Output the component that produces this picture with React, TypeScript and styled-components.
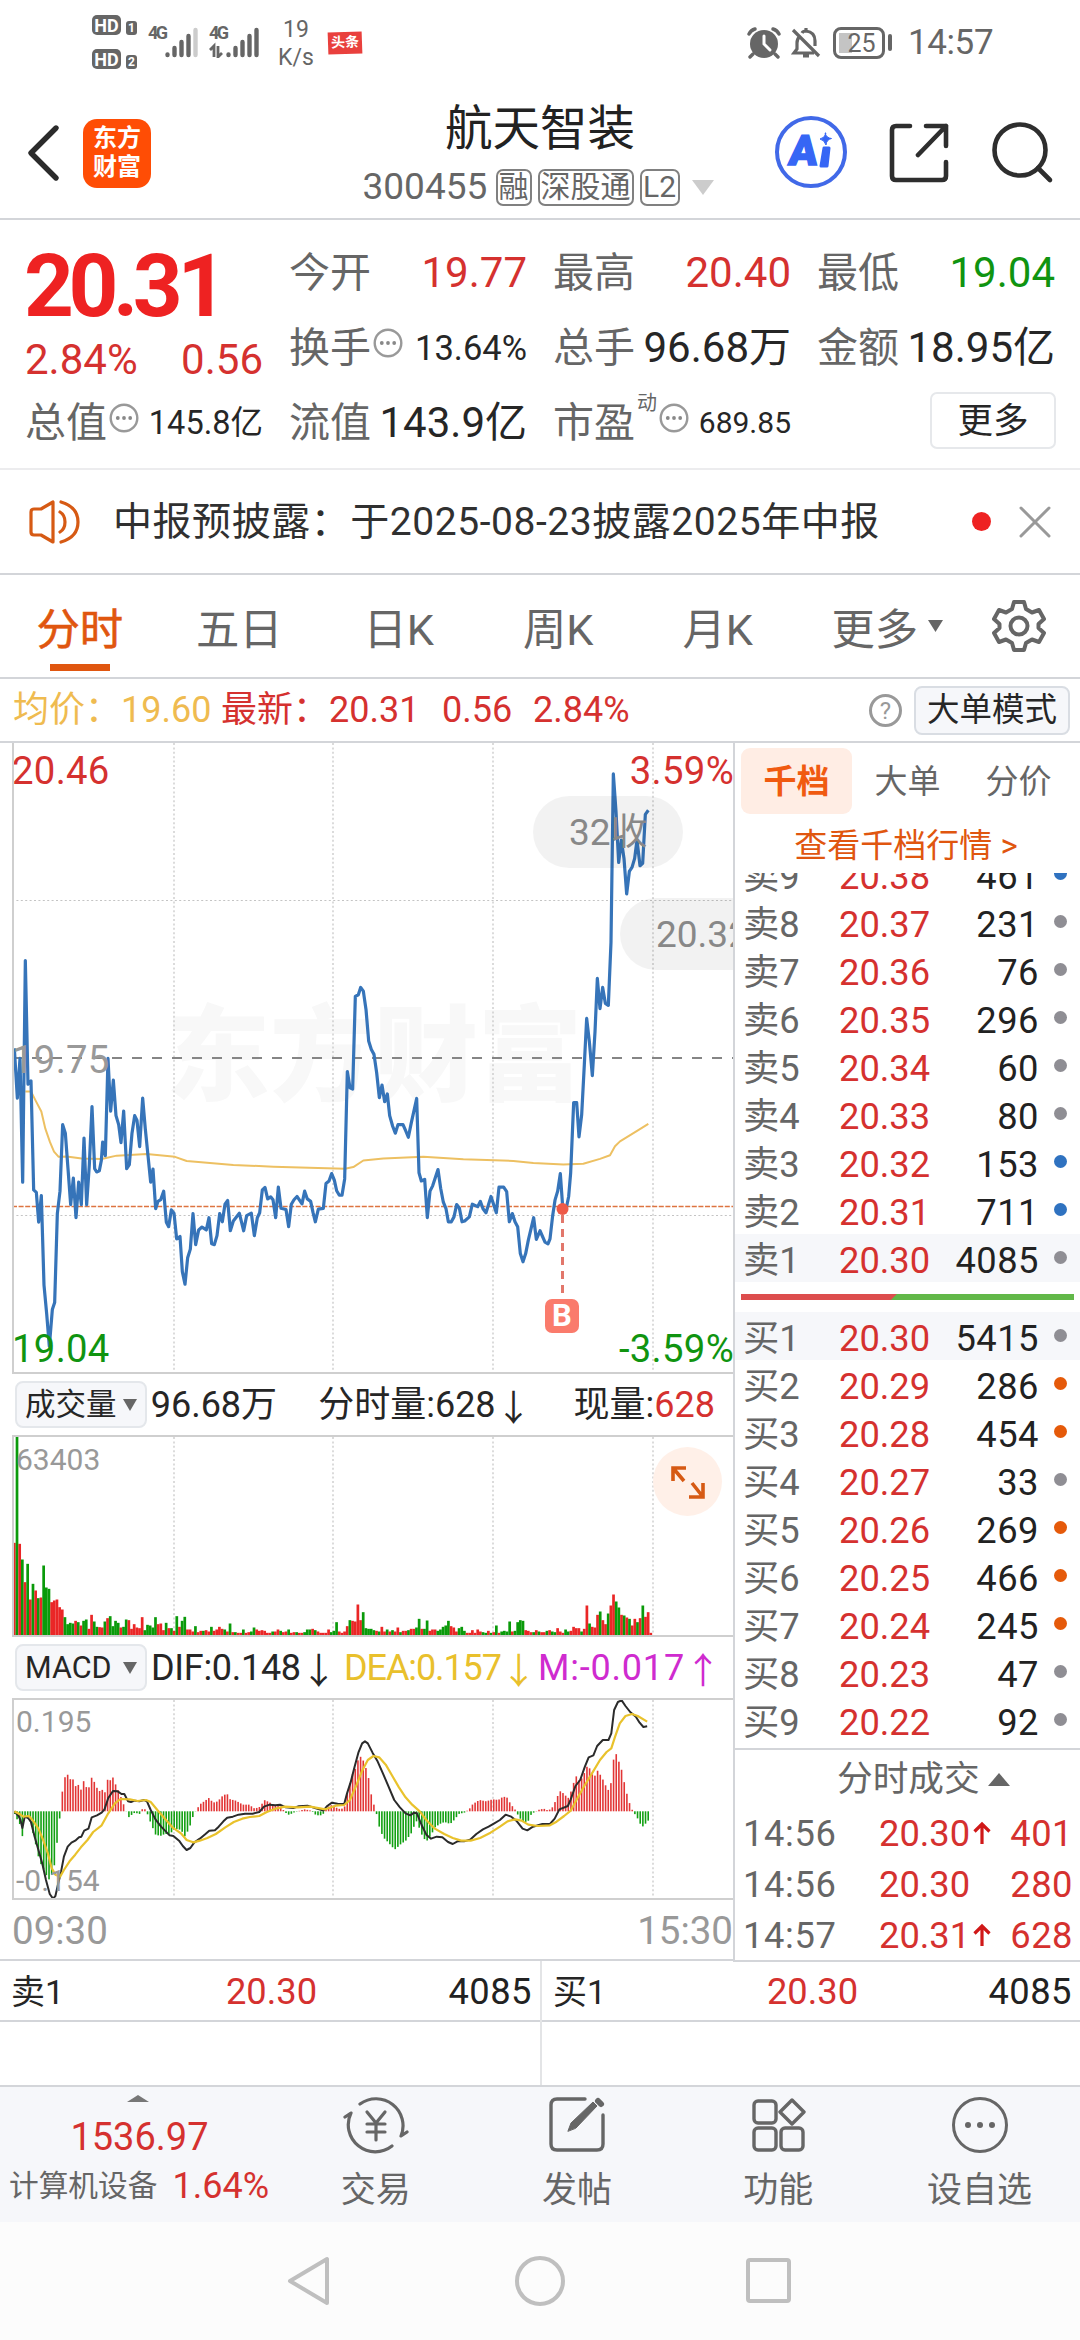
import React from "react";
import styled, { createGlobalStyle } from "styled-components";

const RED = "#d5312f";
const GREEN = "#109410";
const ORANGE = "#e0560f";
const GRAY = "#666";
const INK = "#262626";
const LINE = "#d3d5d9";

const Global = createGlobalStyle`
  *, *::before, *::after { box-sizing: border-box; }
  html, body { margin: 0; padding: 0; background: #fff; }
  body { font-family: Roboto, "Noto Sans CJK SC", sans-serif; color: ${INK}; }
  svg { display: block; flex: none; }
`;

const Screen = styled.main`
  width: 1080px;
  height: 2340px;
  display: flex;
  flex-direction: column;
  overflow: hidden;
  white-space: nowrap;
  background: #fff;
`;

/* ---------- status bar ---------- */
const StatusBar = styled.header`
  height: 88px;
  padding: 15px 88px 0 92px;
  display: flex;
  align-items: flex-start;
  color: ${GRAY};
`;
const HdStack = styled.div`
  display: flex;
  flex-direction: column;
  gap: 14px;
  width: 56px;
`;
const HdRow = styled.div`
  display: flex;
  align-items: flex-end;
  gap: 5px;
  height: 20px;
`;
const HdBadge = styled.span<{ $small?: boolean }>`
  width: ${(p) => (p.$small ? 11 : 29)}px;
  height: ${(p) => (p.$small ? 14 : 20)}px;
  border-radius: ${(p) => (p.$small ? 3 : 5)}px;
  background: #666;
  color: #fff;
  font-size: ${(p) => (p.$small ? 12 : 18)}px;
  line-height: ${(p) => (p.$small ? 14 : 21)}px;
  font-weight: 700;
  text-align: center;
`;
const Signal = styled.div`
  display: flex;
  width: 61px;
  padding-top: 10px;
`;
const SignalTag = styled.span`
  width: 17px;
  font-size: 18px;
  line-height: 16px;
  font-weight: 700;
  letter-spacing: -2.5px;
`;
const Speed = styled.div`
  width: 48px;
  margin-left: 2px;
  padding-top: 1px;
  text-align: center;
  font-size: 23px;
  line-height: 28px;
`;
const NewsTag = styled.span`
  margin: 17px 0 0 8px;
  width: 34px;
  height: 22px;
  background: #e9403d;
  color: #fff;
  font-size: 14px;
  line-height: 21px;
  font-weight: 700;
  text-align: center;
  transform: rotate(-2deg);
`;
const StatusRight = styled.div`
  margin-left: auto;
  display: flex;
  align-items: center;
  height: 55px;
`;
const Battery = styled.span`
  margin-left: 12px;
  width: 52px;
  height: 32px;
  border: 3px solid #666;
  border-radius: 8px;
  background: linear-gradient(90deg, #c4c4c4 13px, transparent 13px) 3px 3px / 41px 20px no-repeat;
  font-size: 25px;
  line-height: 27px;
  padding-left: 5px;
  text-align: center;
`;
const BatteryNub = styled.span`
  margin: 0 16px 0 3px;
  width: 4px;
  height: 17px;
  border-radius: 2px;
  background: #666;
`;
const Clock = styled.span`
  font-size: 35px;
  line-height: 57px;
  letter-spacing: -0.4px;
  width: 84px;
`;

/* ---------- title bar ---------- */
const TitleBar = styled.div`
  height: 132px;
  padding: 0 27px;
  border-bottom: 2px solid ${LINE};
  display: grid;
  grid-template-columns: 240px 1fr 280px;
`;
const TitleLeft = styled.div`
  display: flex;
  align-items: center;
  gap: 22px;
`;
const BrandLogo = styled.div`
  width: 68px;
  height: 69px;
  border-radius: 14px;
  background: #ff4d05;
  color: #fff;
  font-size: 24px;
  line-height: 29px;
  font-weight: 700;
  text-align: center;
  padding-top: 5px;
`;
const TitleCenter = styled.div`
  display: flex;
  flex-direction: column;
  align-items: center;
`;
const StockName = styled.h1`
  margin: 13px 0 0 40px;
  font-size: 47.5px;
  line-height: 56px;
  font-weight: 400;
  color: #222;
`;
const CodeRow = styled.div`
  margin: 12px 0 0 36px;
  height: 36px;
  display: flex;
  align-items: center;
  gap: 6px;
  color: ${GRAY};
  line-height: 36px;
`;
const Code = styled.span`
  width: 127px;
  font-size: 37px;
`;
const Badge = styled.span<{ $w: number }>`
  width: ${(p) => p.$w}px;
  height: 37px;
  border: 2px solid #808080;
  border-radius: 7px;
  font-size: 30px;
  line-height: 32px;
  text-align: center;
  display: flex;
  justify-content: center;
`;
const CodeCaret = styled.span`
  margin-left: 6px;
`;
const TitleRight = styled.div`
  display: flex;
  align-items: center;
  justify-content: flex-end;
`;

/* ---------- quote ---------- */
const Quote = styled.section`
  height: 250px;
  padding: 15px 25px 0;
  border-bottom: 2px solid #ececee;
  display: grid;
  grid-template-columns: repeat(4, 238px);
  grid-template-rows: repeat(3, 75px);
  column-gap: 26px;
`;
const PriceBlock = styled.div`
  grid-row: span 2;
`;
const BigPrice = styled.div`
  height: 100px;
  font-size: 87px;
  line-height: 102px;
  font-weight: 700;
  letter-spacing: -5.4px;
  color: #ee2222;
  margin-left: -1px;
`;
const ChangeRow = styled.div`
  display: flex;
  justify-content: space-between;
  font-size: 42px;
  line-height: 49px;
  color: ${RED};
`;
const Cell = styled.div`
  display: flex;
  align-items: center;
  height: 75px;
`;
const CellLabel = styled.span`
  font-size: 41px;
  line-height: 60px;
  color: ${GRAY};
`;
const CellValue = styled.span<{ $size?: number; $color?: string }>`
  margin-left: auto;
  font-size: ${(p) => p.$size ?? 42}px;
  line-height: 60px;
  color: ${(p) => p.$color ?? INK};
`;
const Super = styled.sup`
  align-self: flex-start;
  margin: 4px 0 0 2px;
  width: 20px;
  font-size: 20px;
  line-height: 28px;
  color: ${GRAY};
`;
const InfoIcon = styled.svg`
  margin: -9px 0 0 2px;
`;
const MoreButton = styled.button`
  margin: -4px -1px 0 auto;
  width: 126px;
  height: 57px;
  padding: 0;
  border: 2px solid #e6e8eb;
  border-radius: 7px;
  background: #fff;
  font: 400 35.5px/50px Roboto, "Noto Sans CJK SC", sans-serif;
  color: ${INK};
`;

/* ---------- notice ---------- */
const Notice = styled.section`
  height: 105px;
  padding: 0 29px;
  border-bottom: 2px solid ${LINE};
  display: flex;
  align-items: center;
`;
const NoticeText = styled.span`
  margin-left: 32px;
  font-size: 39px;
  line-height: 60px;
  letter-spacing: 0.55px;
  color: #303030;
`;
const RedDot = styled.i`
  margin-left: auto;
  width: 19px;
  height: 19px;
  border-radius: 50%;
  background: #ee2222;
`;

/* ---------- period tabs ---------- */
const Periods = styled.nav`
  height: 104px;
  border-bottom: 2px solid ${LINE};
  display: grid;
  grid-template-columns: repeat(6, 159.5px) 1fr;
`;
const Period = styled.div<{ $on?: boolean; $shift?: number }>`
  display: flex;
  justify-content: center;
  align-items: center;
  gap: 10px;
  padding-left: ${(p) => p.$shift ?? 0}px;
  font-size: 43.3px;
  -webkit-text-stroke: ${(p) => (p.$on ? 0.6 : 0)}px currentColor;
  color: ${(p) => (p.$on ? ORANGE : GRAY)};
  background: ${(p) =>
    p.$on ? `linear-gradient(${ORANGE}, ${ORANGE}) center 89px / 60px 7px no-repeat` : "none"};
`;

/* ---------- summary strip ---------- */
const Summary = styled.div`
  height: 62px;
  padding: 0 10px 0 13px;
  display: flex;
  align-items: center;
  font-size: 36px;
  line-height: 60px;
`;
const SummaryText = styled.span<{ $color: string; $w?: number }>`
  width: ${(p) => (p.$w ? p.$w + "px" : "auto")};
  color: ${(p) => p.$color};
`;
const HelpIcon = styled.span`
  margin-left: auto;
  width: 33px;
  height: 33px;
  border: 3px solid #999;
  border-radius: 50%;
  color: #999;
  font-size: 24px;
  line-height: 28px;
  text-align: center;
`;
const ModeButton = styled.span`
  margin-left: 12px;
  width: 156px;
  height: 49px;
  border: 2px solid #d9dde3;
  border-radius: 8px;
  background: #f6f7fa;
  font-size: 32.5px;
  line-height: 44px;
  text-align: center;
`;

/* ---------- main area ---------- */
const Main = styled.section`
  height: 1219px;
  display: grid;
  grid-template-columns: 735px 345px;
`;
const Charts = styled.div`
  border-right: 2px solid ${LINE};
  border-top: 2px solid ${LINE};
  overflow: hidden;
`;
const Plot = styled.div<{ $h: number; $flat?: boolean }>`
  position: relative;
  margin-left: 12px;
  height: ${(p) => p.$h}px;
  width: 722px;
  border: 0 solid #cfcfcf;
  border-width: ${(p) => (p.$flat ? "0 0 2px 2px" : "2px 0 2px 2px")};
  overflow: hidden;
`;
const PlotSvg = styled.svg`
  position: absolute;
  left: -2px;
  top: 0;
`;
const PlotLabel = styled.span<{ $y: number; $right?: boolean; $color: string; $size?: number }>`
  position: absolute;
  ${(p) => (p.$right ? "right: 0;" : p.$size ? "left: 2px;" : "left: -2px;")}
  top: ${(p) => p.$y}px;
  font-size: ${(p) => p.$size ?? 38.3}px;
  line-height: 40px;
  letter-spacing: ${(p) => (p.$size ? 0 : 0.3)}px;
  color: ${(p) => p.$color};
`;
const Watermark = styled.span`
  position: absolute;
  left: 152px;
  top: 245px;
  font-size: 104px;
  line-height: 140px;
  font-weight: 900;
  color: #f8f8f8;
`;
const Bubble = styled.span<{ $x: number; $y: number }>`
  position: absolute;
  left: ${(p) => p.$x}px;
  top: ${(p) => p.$y}px;
  width: 150px;
  height: 72px;
  padding-left: 36px;
  border-radius: 36px;
  background: rgba(0, 0, 0, 0.05);
  color: #888;
  font-size: 37px;
  line-height: 74px;
`;
const BuyMark = styled.span`
  position: absolute;
  left: 531px;
  top: 556px;
  width: 34px;
  height: 34px;
  border-radius: 7px;
  background: #fa7b6c;
  color: #fff;
  font-size: 31px;
  line-height: 34px;
  font-weight: 700;
  text-align: center;
`;
const Expand = styled.span`
  position: absolute;
  right: 12px;
  top: 10px;
  width: 69px;
  height: 69px;
  border-radius: 50%;
  background: #fff0e8;
  display: grid;
  place-items: center;
`;
const Indicator = styled.div`
  height: 61px;
  padding-left: 15px;
  display: flex;
  align-items: center;
  font-size: 36px;
  line-height: 60px;
`;
const Picker = styled.span`
  width: 132px;
  height: 47px;
  padding: 0 8px 0 8px;
  margin-right: 4px;
  display: flex;
  align-items: center;
  justify-content: space-between;
  border: 2px solid #e4e7eb;
  border-radius: 8px;
  background: #f6f7fa;
  font-size: 30.5px;
  line-height: 43px;
`;
const Reading = styled.span<{ $w: number; $color?: string; $ls?: number }>`
  width: ${(p) => p.$w}px;
  color: ${(p) => p.$color ?? INK};
  letter-spacing: ${(p) => p.$ls ?? 0}px;
  display: flex;
`;
const Arrow = styled.span`
  width: 36px;
  display: inline-block;
  text-align: center;
  font-family: "Noto Sans CJK SC", sans-serif;
  letter-spacing: 0;
`;
const Times = styled.div`
  height: 60px;
  padding: 0 0 0 12px;
  border-bottom: 1px solid ${LINE};
  display: flex;
  justify-content: space-between;
  font-size: 38.5px;
  line-height: 62px;
  color: #999;
`;

/* ---------- order book ---------- */
const Book = styled.aside`
  border-top: 2px solid ${LINE};
  border-bottom: 1px solid ${LINE};
  display: flex;
  flex-direction: column;
`;
const BookTabs = styled.div`
  padding: 5px 6px 0;
  display: grid;
  grid-template-columns: repeat(3, 111px);
`;
const BookTab = styled.span<{ $on?: boolean }>`
  height: 66px;
  border-radius: 9px;
  background: ${(p) => (p.$on ? "#ffede4" : "none")};
  color: ${(p) => (p.$on ? "#f05a10" : GRAY)};
  font-weight: ${(p) => (p.$on ? 700 : 400)};
  font-size: 33px;
  line-height: 68px;
  text-align: center;
`;
const BookLink = styled.a`
  height: 59px;
  font-size: 33px;
  line-height: 63px;
  padding-right: 3px;
  text-align: center;
  color: ${ORANGE};
`;
const Asks = styled.div`
  height: 409px;
  overflow: hidden;
  display: flex;
  flex-direction: column;
  justify-content: flex-end;
`;
const Bids = styled.div`
  height: 438px;
  border-bottom: 2px solid ${LINE};
`;
const BookRow = styled.div<{ $best?: boolean }>`
  flex: none;
  height: 48px;
  padding: 3px 13px 0 8px;
  display: grid;
  grid-template-columns: 96px 94px 1fr 28px;
  align-items: start;
  font-size: 36.3px;
  line-height: 47px;
  background: ${(p) => (p.$best ? "#f6f7fa" : "none")};
`;
const Side = styled.span`
  color: ${GRAY};
`;
const Price = styled.span`
  color: ${RED};
`;
const Qty = styled.span<{ $color?: string }>`
  text-align: right;
  letter-spacing: 0.5px;
  color: ${(p) => p.$color ?? "#222"};
`;
const Dot = styled.i<{ $c: string }>`
  justify-self: end;
  width: 13px;
  height: 13px;
  margin-top: 14px;
  border-radius: 50%;
  background: ${(p) => p.$c};
`;
const Ratio = styled.div`
  height: 6px;
  margin: 12px 6px;
  background: linear-gradient(135deg, #dd4d4d 110px, #62b849 110.5px);
`;
const TradesHead = styled.div`
  height: 58px;
  padding: 0 0 0 102px;
  display: flex;
  align-items: center;
  gap: 8px;
  font-size: 35.7px;
  line-height: 58px;
  color: ${GRAY};
`;
const Trade = styled.div`
  height: 51px;
  padding: 0 7px 0 8px;
  display: grid;
  grid-template-columns: 136px 91px 24px 1fr;
  font-size: 36.3px;
  line-height: 52px;
  color: ${RED};
`;
const TradeTime = styled.span`
  color: ${GRAY};
  letter-spacing: 0.6px;
`;
const UpArrow = styled.svg`
  margin: 13px 0 0 2px;
`;

/* ---------- level one strip ---------- */
const LevelOne = styled.section`
  height: 127px;
  display: grid;
  grid-template-columns: 1fr 1fr;
  border-top: 1px solid ${LINE};
  border-bottom: 2px solid ${LINE};
`;
const Level = styled.div`
  & + & { border-left: 2px solid #e3e4e6; }
`;
const LevelRow = styled.div`
  height: 61px;
  padding: 0 8px 0 11px;
  display: grid;
  grid-template-columns: 1fr auto 1fr;
  border-bottom: 2px solid ${LINE};
  font-size: 36.3px;
  line-height: 62px;
`;
const LevelName = styled.span`
  font-size: 34px;
`;

/* ---------- bottom bars ---------- */
const ActionBar = styled.nav`
  height: 135px;
  background: #f6f7fa;
  display: grid;
  grid-template-columns: 275px repeat(4, 201.3px);
`;
const Sector = styled.div`
  display: flex;
  flex-direction: column;
  align-items: center;
  padding-top: 8px;
`;
const SectorIndex = styled.span`
  margin: 11px 0 0 4px;
  font-size: 38px;
  line-height: 48px;
  color: ${RED};
`;
const SectorRow = styled.span`
  display: flex;
  gap: 15px;
  margin-left: 3px;
  font-size: 29.7px;
  line-height: 50px;
  color: ${GRAY};
`;
const SectorPct = styled.span`
  font-size: 36px;
  color: ${RED};
`;
const Action = styled.div`
  display: flex;
  flex-direction: column;
  align-items: center;
  padding-top: 8px;
  font-size: 35px;
  line-height: 60px;
  color: ${GRAY};
  gap: 6px;
`;
const SystemBar = styled.footer`
  height: 118px;
  background: #fcfcfc;
  display: flex;
  justify-content: center;
  align-items: center;
  gap: 177px;
`;

/* ---------- small shapes ---------- */
const Caret = ({ w, h, color, up }: { w: number; h: number; color: string; up?: boolean }) => (
  <svg width={w} height={h} viewBox="0 0 10 10" preserveAspectRatio="none" fill={color}>
    <path d={up ? "M0 10L5 0L10 10Z" : "M0 0H10L5 10Z"} />
  </svg>
);
const Info = () => (
  <InfoIcon width="30" height="30" viewBox="0 0 30 30">
    <circle cx="15" cy="15" r="13.300" fill="none" stroke="#999" strokeWidth="2.4" />
    <g fill="#888">
      <circle cx="8.8" cy="15" r="1.900" />
      <circle cx="15" cy="15" r="1.900" />
      <circle cx="21.200" cy="15" r="1.900" />
    </g>
  </InfoIcon>
);
const BarsIcon = styled.svg`
  margin: 2px 0 0 -17px;
`;
const Bars = ({ dim, data }: { dim?: boolean; data?: boolean }) => (
  <BarsIcon width="50" height="31" viewBox="0 0 50 31">
    <g stroke="#666" strokeWidth="4.400" strokeLinecap="round">
      <path d="M19.500 27.500V28M26.500 21V28M33.500 15V28M40.500 9V28" />
      <path d="M47.500 3V28" stroke={dim ? "#ccc" : "#666"} />
    </g>
    {data && <path d="M1 23L5 19V30M9 19V30L13 26" stroke="#666" strokeWidth="2.800" fill="none" />}
  </BarsIcon>
);

/* ---------- intraday data ---------- */
const pricePath =
  "43,755 52,877 60,780 68,1083 76,540 84,843 93,835 101,1102 109,1108 116,1181 124,1116 132,1335 140,1405 148,1485 157,1395 164,1378 172,1160 180,1105 188,942 196,963 204,1050 212,1138 220,1073 228,1170 236,1083 244,1138 252,975 260,1138 268,1040 276,898 284,1050 290,1058 298,1055 304,1030 308,985 316,1018 324,780 332,909 340,833 348,920 356,942 363,986 371,909 380,1050 388,1040 396,963 404,920 411,932 419,996 428,877 436,953 444,1018 452,1083 459,1051 467,1148 474,1130 482,1126 491,1105 499,1181 506,1192 514,1151 522,1159 530,1222 540,1216 547,1302 555,1333 563,1268 571,1247 579,1160 587,1236 596,1200 606,1193 619,1200 627,1170 635,1234 643,1236 651,1214 659,1160 667,1180 675,1137 683,1128 691,1202 700,1178 718,1159 731,1202 740,1165 754,1159 763,1214 772,1170 779,1158 787,1102 795,1096 803,1124 812,1119 819,1126 827,1170 835,1095 843,1147 858,1150 866,1192 874,1137 882,1126 891,1118 906,1136 914,1105 922,1124 932,1130 939,1157 946,1180 955,1149 970,1147 978,1086 987,1080 995,1062 1003,1078 1010,1104 1018,1115 1026,1115 1034,1075 1042,812 1050,852 1058,855 1066,628 1075,624 1082,606 1090,615 1098,660 1106,737 1114,758 1122,770 1130,815 1138,876 1146,845 1154,886 1162,867 1169,920 1178,946 1186,963 1194,942 1209,942 1217,957 1225,973 1234,937 1250,878 1257,1060 1264,1080 1274,1076 1282,1170 1290,1105 1298,1092 1314,1052 1322,1098 1330,1132 1338,1148 1345,1180 1354,1180 1362,1168 1370,1138 1378,1146 1386,1180 1394,1178 1408,1168 1417,1137 1433,1143 1441,1130 1449,1148 1458,1158 1473,1118 1489,1158 1497,1095 1511,1095 1520,1106 1528,1180 1537,1160 1545,1180 1553,1192 1561,1258 1569,1278 1577,1258 1585,1225 1601,1170 1609,1223 1620,1202 1635,1230 1644,1234 1650,1222 1658,1165 1665,1127 1673,1105 1681,1062 1688,1143 1698,1150 1706,1118 1712,1060 1721,888 1730,888 1737,972 1745,918 1753,795 1760,682 1768,738 1777,822 1785,715 1792,584 1800,658 1808,606 1816,645 1825,650 1833,495 1840,83 1848,175 1856,300 1864,245 1872,290 1880,377 1888,322 1896,312 1904,290 1911,245 1920,308 1928,302 1936,182 1945,172";
const averagePath =
  "76,861 93,861 108,885 124,910 136,952 150,985 162,1008 176,1021 200,1020 245,1025 305,1026 350,1018 440,1014 525,1021 560,1031 700,1041 820,1045 1035,1050 1060,1046 1090,1030 1150,1025 1270,1021 1390,1027 1540,1031 1600,1036 1690,1040 1750,1038 1800,1026 1830,1017 1845,995 1860,983 1910,958 1945,940";

// Volume per minute; a negative entry is a falling minute.
const volumes = [
  278, -597, 275, -228, 160, -215, 108, -155, 135, -112, 114, -210, -144, -140, 100, 105, 108, 85, 78, -55,
  -34, -38, -36, 44, -40, 30, -44, -48, 20, 62, -42, -26, 25, 24, -42, 52, -58, -28, -44, -38,
  24, -26, -48, 46, 20, 34, 24, 22, 55, -16, -32, -30, -24, -55, 34, 36, 16, -38, 22, -22,
  14, -58, 26, -44, -56, 18, 18, 12, -28, 10, 14, -14, 16, 12, -26, 14, 18, 26, 20, -18,
  12, -36, 10, -10, 8, 8, -18, 8, 10, -12, -24, 18, 14, 16, 14, 8, 8, -12, 12, 18,
  -14, 10, 12, -18, 8, 10, -10, 8, 8, -10, -18, -18, 20, -16, 12, 8, 8, 8, 18, -10,
  -14, -40, 12, 8, 12, 28, -46, 44, 42, 93, 46, -70, -22, -20, -20, -16, 14, -12, 26, 12,
  -18, 12, -16, 12, 24, -10, 14, 14, -16, 20, 20, -24, -50, 20, -20, -45, 14, 18, 18, -14,
  -18, -26, -30, -44, 28, 24, 12, -22, -26, -14, 8, 8, 16, 8, 18, 12, -10, -8, 14, -8,
  10, -30, 8, -12, -14, -12, -42, 12, -14, -40, -46, -44, 16, 14, 10, -10, 16, -12, 10, 10,
  -14, 16, -12, -10, 22, 12, 8, -18, -12, 14, 26, 22, 22, -12, 20, 90, -36, 26, 24, 62,
  -72, 46, 34, -66, 90, 123, -102, -84, 62, -60, 54, -50, 30, 50, -40, 52, -90, 56, 70, 8,
];

const macdEnvelope: [number, number][] = [
  [31, 8], [37, 25], [43, 40], [48, 75], [54, 15], [60, 15], [66, 35], [72, 75], [78, 110], [84, 150], [90, 165], [98, 190], [104, 205],
  [110, 190], [116, 160], [122, 85], [127, 20], [132, -55], [138, -102], [144, -110], [150, -95], [155, -96], [160, -75], [166, -80],
  [172, -65], [178, -92], [184, -70], [189, -72], [195, -103], [201, -86], [206, -70], [212, -60], [218, -65], [224, -55], [229, -100],
  [235, -92], [240, -102], [246, -78], [252, -60], [260, -30], [266, -6], [273, 18], [280, 10], [286, 4], [296, 8], [302, -7], [308, -6],
  [314, 12], [320, 36], [330, 70], [340, 74], [350, 68], [360, 68], [372, 52], [384, 56], [392, 75], [398, 60], [404, 40], [410, 12],
  [418, -8], [425, -22], [435, -32], [443, -40], [452, -26], [462, -30], [470, -44], [481, -54], [488, -36], [500, -32], [515, -20],
  [528, -20], [540, -8], [552, -14], [560, -34], [570, -28], [582, -18], [595, -14], [605, 4], [613, 11], [622, 4], [645, -6],
  [660, -2], [670, 12], [684, 12], [690, -10], [705, -20], [714, -10], [722, -6], [730, -12], [736, -55], [742, -85], [748, -115],
  [754, -130], [760, -160], [766, -165], [772, -145], [780, -110], [786, -55], [792, -22], [798, 8], [804, 48], [812, 78], [822, 92],
  [832, 108], [838, 114], [848, 100], [860, 88], [872, 65], [882, 28], [890, 55], [896, 78], [904, 90], [914, 70], [922, 48],
  [932, 38], [942, 32], [954, 38], [964, 24], [972, 8], [984, 4], [994, -6], [1002, -22], [1016, -34], [1030, -30], [1044, -36],
  [1056, -34], [1066, -44], [1074, -42], [1082, -22], [1092, -4], [1100, 18], [1110, 34], [1120, 28], [1126, 8], [1140, -4],
  [1152, -8], [1162, -2], [1172, -14], [1180, -42], [1188, -62], [1196, -50], [1204, -40], [1210, -60], [1216, -88], [1222, -108],
  [1228, -88], [1236, -108], [1244, -135], [1250, -128], [1258, -100], [1266, -122], [1274, -105], [1280, -88], [1288, -62],
  [1294, -80], [1300, -155], [1305, -174], [1311, -150], [1318, -120], [1325, -70], [1332, -32], [1338, -8], [1344, 6], [1352, 24],
  [1360, 48], [1366, 40], [1373, 28],
];
const envelopeAt = (x: number) => {
  const i = macdEnvelope.findIndex(([px]) => px >= x);
  if (i <= 0) return macdEnvelope[i === 0 ? 0 : macdEnvelope.length - 1][1];
  const [x0, y0] = macdEnvelope[i - 1];
  const [x1, y1] = macdEnvelope[i];
  return y0 + ((y1 - y0) * (x - x0)) / (x1 - x0);
};
const difPath =
  "31,514 40,528 44,540 48,564 53,530 60,534 66,545 74,590 82,630 90,670 98,720 106,762 113,776 118,768 124,730 130,695 136,650 144,620 152,608 160,602 168,592 173,590 179,572 188,566 195,532 206,526 216,518 222,508 230,474 240,453 250,454 258,462 264,462 272,484 278,486 286,482 296,484 306,480 312,484 320,510 330,538 342,560 360,586 368,588 380,602 388,618 396,630 404,624 412,608 424,596 436,582 444,572 456,571 464,560 474,544 482,533 494,530 506,524 520,521 536,521 550,516 560,500 572,494 584,496 594,494 606,502 622,504 634,499 652,497 668,504 686,512 694,498 704,488 716,491 730,492 736,460 744,425 752,380 760,338 768,310 774,304 780,310 790,338 800,362 812,400 824,440 836,480 848,502 860,520 870,526 878,518 884,520 894,555 904,584 914,596 926,590 938,592 950,606 960,612 970,604 984,604 998,598 1010,582 1024,568 1036,560 1048,550 1060,540 1072,524 1084,530 1096,544 1108,566 1118,571 1130,560 1150,552 1166,552 1176,536 1186,508 1204,498 1210,478 1220,438 1230,420 1240,380 1248,352 1258,346 1266,318 1278,300 1290,300 1296,280 1302,210 1310,186 1318,181 1326,198 1336,216 1348,230 1356,248 1364,261 1372,259";
const deaPath =
  "31,514 42,522 50,530 62,528 72,545 82,566 92,600 102,640 110,684 118,704 128,710 136,690 148,664 160,644 172,622 186,600 198,576 216,556 230,520 244,490 256,477 276,478 292,483 310,480 320,486 334,510 350,536 366,562 384,580 396,600 410,607 424,602 440,594 458,582 478,562 496,546 514,536 530,531 550,528 566,516 584,506 604,500 632,502 658,500 690,508 712,497 730,495 742,480 756,435 768,392 780,360 792,348 804,352 818,374 832,408 846,442 860,472 874,494 890,514 904,540 922,566 942,582 960,594 978,602 998,602 1018,594 1040,578 1060,560 1076,544 1092,538 1106,542 1120,554 1140,558 1166,556 1180,545 1196,528 1210,512 1224,475 1240,435 1256,398 1272,360 1286,336 1296,325 1304,290 1314,250 1326,228 1340,222 1352,228 1372,245";

const verticals = [162, 321, 481, 641];

type BookLevel = [string, string, string, string];
const G = "#8f8e94";
const B = "#2f72c0";
const O = "#e55a0a";
const asks: BookLevel[] = [
  ["卖9", "20.38", "461", B],
  ["卖8", "20.37", "231", G],
  ["卖7", "20.36", "76", G],
  ["卖6", "20.35", "296", G],
  ["卖5", "20.34", "60", G],
  ["卖4", "20.33", "80", G],
  ["卖3", "20.32", "153", B],
  ["卖2", "20.31", "711", B],
  ["卖1", "20.30", "4085", G],
];
const bids: BookLevel[] = [
  ["买1", "20.30", "5415", G],
  ["买2", "20.29", "286", O],
  ["买3", "20.28", "454", O],
  ["买4", "20.27", "33", G],
  ["买5", "20.26", "269", O],
  ["买6", "20.25", "466", O],
  ["买7", "20.24", "245", O],
  ["买8", "20.23", "47", G],
  ["买9", "20.22", "92", G],
];
const trades = [
  ["14:56", "20.30", true, "401"],
  ["14:56", "20.30", false, "280"],
  ["14:57", "20.31", true, "628"],
] as const;

const Grid = ({ h }: { h: number }) => (
  <g stroke="#c4c4c4" strokeWidth="1.200" strokeDasharray="2 2.4">
    {verticals.map((x) => (
      <path key={x} d={`M${x} 0V${h}`} />
    ))}
  </g>
);

const BookLine = ({ row, best }: { row: BookLevel; best: boolean }) => (
  <BookRow $best={best}>
    <Side>{row[0]}</Side>
    <Price>{row[1]}</Price>
    <Qty>{row[2]}</Qty>
    <Dot $c={row[3]} />
  </BookRow>
);

const PriceChart = () => (
  <Plot $h={631} $flat>
    <Watermark>东方财富</Watermark>
    <PlotSvg width="722" height="632">
      <Grid h={632} />
      <path d="M0 157.500H722M0 472.500H722" stroke="#c4c4c4" strokeWidth="1.200" strokeDasharray="2 2.4" />
      <path d="M0 315H722" stroke="#858585" strokeWidth="2" strokeDasharray="10 10" />
      <path d="M0 463.500H722" stroke="#dd7440" strokeWidth="1.600" strokeDasharray="5 1.6" />
      <svg width="722" height="632" viewBox="36 7.3 2166 1548" preserveAspectRatio="none">
        <g fill="none" strokeLinejoin="round">
          <polyline points={averagePath} stroke="#edc062" strokeWidth="2" vectorEffect="non-scaling-stroke" />
          <polyline points={pricePath} stroke="#3674b9" strokeWidth="3.200" vectorEffect="non-scaling-stroke" />
        </g>
      </svg>
      <path d="M550.500 472V557" stroke="#e2776b" strokeWidth="3" strokeDasharray="8 6" />
      <circle cx="550.500" cy="466" r="6" fill="#ee5a48" />
    </PlotSvg>
    <PlotLabel $y={8} $color={RED}>20.46</PlotLabel>
    <PlotLabel $y={8} $color={RED} $right>3.59%</PlotLabel>
    <PlotLabel $y={297} $color="#999">19.75</PlotLabel>
    <PlotLabel $y={586} $color={GREEN}>19.04</PlotLabel>
    <PlotLabel $y={586} $color={GREEN} $right>-3.59%</PlotLabel>
    <Bubble $x={519} $y={53}>32收</Bubble>
    <Bubble $x={606} $y={155}>20.32</Bubble>
    <BuyMark>B</BuyMark>
  </Plot>
);

const VolumeChart = () => (
  <Plot $h={202}>
    <PlotSvg width="722" height="200">
      <Grid h={200} />
      {volumes.map((v, i) => (
        <rect
          key={i}
          x={1 + i * 2.663}
          y={198.5 - Math.abs(v) / 3}
          width="2.700"
          height={Math.abs(v) / 3}
          fill={v > 0 ? "#ea2626" : "#0a9a0a"}
        />
      ))}
    </PlotSvg>
    <PlotLabel $y={3} $color="#999" $size={30}>63403</PlotLabel>
    <Expand>
      <svg width="38" height="36" viewBox="0 0 38 36" fill="none" stroke="#d65a14" strokeWidth="3.600">
        <path d="M4 17V4H17M4 4L15 17M34 19V33H20M34 33L23 19" />
      </svg>
    </Expand>
  </Plot>
);

const MacdChart = () => (
  <Plot $h={202}>
    <PlotSvg width="722" height="200">
      <Grid h={200} />
      {Array.from({ length: 239 }, (_, i) => {
        const v = envelopeAt(31 + i * 5.64) / 3;
        return (
          <rect
            key={i}
            x={1.6 + i * 2.663}
            y={v > 0 ? 111.3 : 111.3 + v}
            width="1.600"
            height={Math.abs(v)}
            fill={v > 0 ? "#12a012" : "#e23535"}
          />
        );
      })}
      <svg width="722" height="200" viewBox="26 180 1530 600" preserveAspectRatio="none">
        <g fill="none" strokeLinejoin="round">
          <polyline points={difPath} stroke="#2b2b2b" strokeWidth="2" vectorEffect="non-scaling-stroke" />
          <polyline points={deaPath} stroke="#e9c22c" strokeWidth="2.200" vectorEffect="non-scaling-stroke" />
        </g>
      </svg>
    </PlotSvg>
    <PlotLabel $y={2} $color="#999" $size={30}>0.195</PlotLabel>
    <PlotLabel $y={161} $color="#999" $size={30}>-0.154</PlotLabel>
  </Plot>
);

const AiIcon = styled.svg`
  margin: -2px 41px 0 0;
`;
const ShareIcon = styled.svg`
  margin: 0 43px 0 0;
`;
const SearchIcon = styled.svg`
  margin-right: -1px;
`;
const BellIcon = styled.svg`
  margin-left: 10px;
`;
const CloseIcon = styled.svg`
  margin-left: 28px;
`;

export default function App() {
  return (
    <Screen>
      <Global />
      <StatusBar>
        <HdStack>
          <HdRow><HdBadge>HD</HdBadge><HdBadge $small>1</HdBadge></HdRow>
          <HdRow><HdBadge>HD</HdBadge><HdBadge $small>2</HdBadge></HdRow>
        </HdStack>
        <Signal><SignalTag>4G</SignalTag><Bars dim /></Signal>
        <Signal><SignalTag>4G</SignalTag><Bars data /></Signal>
        <Speed>19<br />K/s</Speed>
        <NewsTag>头条</NewsTag>
        <StatusRight>
          <svg width="34" height="32" viewBox="0 0 34 32">
            <circle cx="17" cy="17" r="14" fill="#666" />
            <path d="M2 7Q4 3 8 2M32 7Q30 3 26 2M6 27L3 30M28 27L31 30" stroke="#666" strokeWidth="3.400" strokeLinecap="round" fill="none" />
            <path d="M17 9V17L23 23" stroke="#fff" strokeWidth="3" strokeLinecap="round" fill="none" />
          </svg>
          <BellIcon width="30" height="32" viewBox="0 0 30 32" fill="none" stroke="#666" strokeWidth="3.200">
            <path d="M2 3L28 29M9 9Q6 12 6 16V22L3 26H23M11 6Q12 4 15 4Q24 5 24 14V19M12 29H18M15 1V4" />
          </BellIcon>
          <Battery>25</Battery>
          <BatteryNub />
          <Clock>14:57</Clock>
        </StatusRight>
      </StatusBar>

      <TitleBar>
        <TitleLeft>
          <svg width="34" height="58" viewBox="0 0 34 58" fill="none" stroke="#2b2b2b" strokeWidth="5.400" strokeLinecap="round" strokeLinejoin="round">
            <path d="M29 4L4 29L29 54" />
          </svg>
          <BrandLogo>东方<br />财富</BrandLogo>
        </TitleLeft>
        <TitleCenter>
          <StockName>航天智装</StockName>
          <CodeRow>
            <Code>300455</Code>
            <Badge $w={36}>融</Badge>
            <Badge $w={96}>深股通</Badge>
            <Badge $w={40}>L2</Badge>
            <CodeCaret><Caret w={22} h={15} color="#ccc" /></CodeCaret>
          </CodeRow>
        </TitleCenter>
        <TitleRight>
          <AiIcon width="74" height="74" viewBox="0 0 74 74">
            <circle cx="37" cy="37" r="34" fill="none" stroke="#4169e8" strokeWidth="4" />
            <path d="M48 19Q49.500 24 54.500 24.500Q49.500 25.500 49 31Q47.500 26 43 25Q48 24 49 19Z" transform="translate(3 -1)" fill="#3666f5" stroke="#3666f5" />
            <text x="14" y="50" fontSize="42" fontWeight="900" fontFamily="Roboto, sans-serif" fill="#3666f5" stroke="#3666f5" strokeWidth="1.500" transform="skewX(-6) translate(5 0)">A</text>
            <path d="M50 33H55L53 51H47Z" fill="#3666f5" stroke="#3666f5" strokeWidth="3" strokeLinejoin="round" />
          </AiIcon>
          <ShareIcon width="60" height="60" viewBox="0 0 60 60" fill="none" stroke="#2e2e2e" strokeWidth="4.600" strokeLinecap="round" strokeLinejoin="round">
            <path d="M21 3H7Q3 3 3 7V53Q3 57 7 57H53Q57 57 57 53V39M37 3H57V23M57 3L29 32" />
          </ShareIcon>
          <SearchIcon width="62" height="62" viewBox="0 0 62 62" fill="none" stroke="#2e2e2e" strokeWidth="4.600" strokeLinecap="round">
            <circle cx="28" cy="28" r="25.500" />
            <path d="M46 46L58 58" />
          </SearchIcon>
        </TitleRight>
      </TitleBar>

      <Quote>
        <PriceBlock>
          <BigPrice>20.31</BigPrice>
          <ChangeRow><span>2.84%</span><span>0.56</span></ChangeRow>
        </PriceBlock>
        <Cell><CellLabel>今开</CellLabel><CellValue $color={RED}>19.77</CellValue></Cell>
        <Cell><CellLabel>最高</CellLabel><CellValue $color={RED}>20.40</CellValue></Cell>
        <Cell><CellLabel>最低</CellLabel><CellValue $color={GREEN}>19.04</CellValue></Cell>
        <Cell><CellLabel>换手</CellLabel><Info /><CellValue $size={34.5}>13.64%</CellValue></Cell>
        <Cell><CellLabel>总手</CellLabel><CellValue>96.68万</CellValue></Cell>
        <Cell><CellLabel>金额</CellLabel><CellValue>18.95亿</CellValue></Cell>
        <Cell><CellLabel>总值</CellLabel><Info /><CellValue $size={32.5}>145.8亿</CellValue></Cell>
        <Cell><CellLabel>流值</CellLabel><CellValue>143.9亿</CellValue></Cell>
        <Cell><CellLabel>市盈</CellLabel><Super>动</Super><Info /><CellValue $size={30}>689.85</CellValue></Cell>
        <Cell><MoreButton>更多</MoreButton></Cell>
      </Quote>

      <Notice>
        <svg width="52" height="48" viewBox="0 0 52 48" fill="none" stroke="#d65a14" strokeWidth="3.200" strokeLinejoin="round">
          <path d="M24 4V44L12 37H5Q2 37 2 34V14Q2 11 5 11H12Z" />
          <path d="M31 14Q36 17 36 24Q36 31 31 34M32 4Q49 9 49 24Q49 39 32 44" strokeLinecap="round" />
        </svg>
        <NoticeText>中报预披露：于2025-08-23披露2025年中报</NoticeText>
        <RedDot />
        <CloseIcon width="32" height="32" viewBox="0 0 32 32" stroke="#999" strokeWidth="3" strokeLinecap="round">
          <path d="M2 2L30 30M30 2L2 30" />
        </CloseIcon>
      </Notice>

      <Periods>
        <Period $on>分时</Period>
        <Period>五日</Period>
        <Period>日K</Period>
        <Period>周K</Period>
        <Period>月K</Period>
        <Period $shift={20}>更多<Caret w={15} h={12} color="#666" /></Period>
        <Period>
          <svg width="54" height="54" viewBox="0 0 54 54" fill="none" stroke="#666" strokeWidth="4" strokeLinejoin="round">
            <path d="M22 3H32L34 10L40 13.500L47 11L52 20L46.500 25V29L52 34L47 43L40 40.500L34 44L32 51H22L20 44L14 40.500L7 43L2 34L7.500 29V25L2 20L7 11L14 13.500L20 10Z" />
            <circle cx="27" cy="27" r="8.500" />
          </svg>
        </Period>
      </Periods>

      <Summary>
        <SummaryText $color="#efbb50" $w={208}>均价：19.60</SummaryText>
        <SummaryText $color={RED} $w={221}>最新：20.31</SummaryText>
        <SummaryText $color={RED} $w={91}>0.56</SummaryText>
        <SummaryText $color={RED}>2.84%</SummaryText>
        <HelpIcon>?</HelpIcon>
        <ModeButton>大单模式</ModeButton>
      </Summary>

      <Main>
        <Charts>
          <PriceChart />
          <Indicator>
            <Picker>成交量<Caret w={14} h={12} color="#666" /></Picker>
            <Reading $w={168}>96.68万</Reading>
            <Reading $w={256}>分时量:628<Arrow>↓</Arrow></Reading>
            <Reading $w={160}>现量:<Price>628</Price></Reading>
          </Indicator>
          <VolumeChart />
          <Indicator>
            <Picker>MACD<Caret w={14} h={12} color="#666" /></Picker>
            <Reading $w={193} $ls={-0.3}>DIF:0.148<Arrow>↓</Arrow></Reading>
            <Reading $w={194} $color="#e9c02c" $ls={-1.1}>DEA:0.157<Arrow>↓</Arrow></Reading>
            <Reading $w={195} $color="#cf2bcf" $ls={0.8}>M:-0.017<Arrow>↑</Arrow></Reading>
          </Indicator>
          <MacdChart />
          <Times><span>09:30</span><span>15:30</span></Times>
        </Charts>

        <Book>
          <BookTabs>
            <BookTab $on>千档</BookTab>
            <BookTab>大单</BookTab>
            <BookTab>分价</BookTab>
          </BookTabs>
          <BookLink>查看千档行情 &gt;</BookLink>
          <Asks>
            {asks.map((r) => <BookLine key={r[0]} row={r} best={r[0] === "卖1"} />)}
          </Asks>
          <Ratio />
          <Bids>
            {bids.map((r) => <BookLine key={r[0]} row={r} best={r[0] === "买1"} />)}
          </Bids>
          <TradesHead>分时成交<Caret w={22} h={13} color="#666" up /></TradesHead>
          {trades.map(([time, price, up, qty], i) => (
            <Trade key={i}>
              <TradeTime>{time}</TradeTime>
              <span>{price}</span>
              <span>
                {up && (
                  <UpArrow width="20" height="24" viewBox="0 0 20 24" fill="none" stroke="#d01818" strokeWidth="3.200">
                    <path d="M10 23V3M2.500 10.500L10 3L17.500 10.500" />
                  </UpArrow>
                )}
              </span>
              <Qty $color={RED}>{qty}</Qty>
            </Trade>
          ))}
        </Book>
      </Main>

      <LevelOne>
        <Level>
          <LevelRow><LevelName>卖1</LevelName><Price>20.30</Price><Qty>4085</Qty></LevelRow>
        </Level>
        <Level>
          <LevelRow><LevelName>买1</LevelName><Price>20.30</Price><Qty>4085</Qty></LevelRow>
        </Level>
      </LevelOne>

      <ActionBar>
        <Sector>
          <Caret w={22} h={7} color="#777" up />
          <SectorIndex>1536.97</SectorIndex>
          <SectorRow>计算机设备<SectorPct>1.64%</SectorPct></SectorRow>
        </Sector>
        <Action>
          <svg width="66" height="60" viewBox="0 0 66 60" fill="none" stroke="#666" strokeWidth="3.200" strokeLinecap="round" strokeLinejoin="round">
            <path d="M17 9A27 27 0 0 1 58 41L64 37M49 51A27 27 0 0 1 8 18L2 22" />
            <path d="M24 17L33 28L42 17M33 28V45M24 29H42M24 37H42" />
          </svg>
          交易
        </Action>
        <Action>
          <svg width="60" height="60" viewBox="0 0 60 60" fill="none" stroke="#666" strokeWidth="3.400" strokeLinecap="round">
            <path d="M38 4H10Q4 4 4 10V49Q4 55 10 55H50Q56 55 56 49V20" />
            <path d="M21 36L24 28L46 7L50 11L29 33Z" fill="#666" strokeWidth="1" />
            <path d="M51 6L54 9" strokeWidth="6" />
          </svg>
          发帖
        </Action>
        <Action>
          <svg width="56" height="60" viewBox="0 0 56 60" fill="none" stroke="#666" strokeWidth="3.400" strokeLinejoin="round">
            <rect x="4" y="6" width="22" height="22" rx="4" />
            <rect x="4" y="33" width="22" height="22" rx="4" />
            <rect x="31" y="33" width="22" height="22" rx="4" />
            <path d="M42 5L54 17L42 29L30 17Z" />
          </svg>
          功能
        </Action>
        <Action>
          <svg width="60" height="60" viewBox="0 0 60 60" fill="#666">
            <circle cx="30" cy="30" r="26.500" fill="none" stroke="#666" strokeWidth="3" />
            <circle cx="18" cy="30" r="3" />
            <circle cx="30" cy="30" r="3" />
            <circle cx="42" cy="30" r="3" />
          </svg>
          设自选
        </Action>
      </ActionBar>

      <SystemBar>
        <svg width="52" height="52" viewBox="0 0 52 52" fill="none" stroke="#bfbfbf" strokeWidth="4" strokeLinejoin="round">
          <path d="M42 4V48L5 26Z" />
        </svg>
        <svg width="52" height="52" viewBox="0 0 52 52" fill="none" stroke="#bfbfbf" strokeWidth="4">
          <circle cx="26" cy="26" r="23" />
        </svg>
        <svg width="52" height="52" viewBox="0 0 52 52" fill="none" stroke="#bfbfbf" strokeWidth="4">
          <rect x="5" y="5" width="41" height="41" rx="2" />
        </svg>
      </SystemBar>
    </Screen>
  );
}
